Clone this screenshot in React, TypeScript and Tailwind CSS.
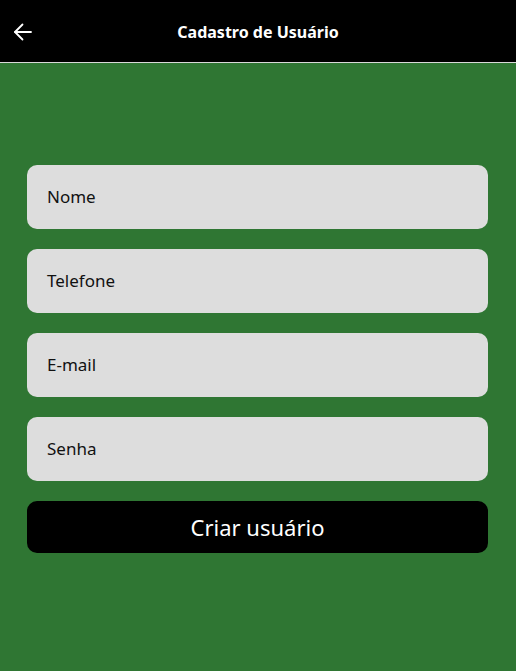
import React from "react";

export default function App() {
  const fields = ["Nome", "Telefone", "E-mail", "Senha"];
  return (
    <div className="w-[516px] h-[671px] bg-[#2f7633] flex flex-col" style={{ fontFamily: '"Noto Sans", "Open Sans", sans-serif' }}>
      <div className="h-[63px] bg-black border-b border-[#d9d9d9] flex items-center relative shrink-0">
        <div className="absolute left-[11px] top-[20px]">
          <svg width="24" height="24" viewBox="0 0 24 24" fill="none" stroke="white" strokeWidth="1.8" strokeLinecap="round" strokeLinejoin="round">
            <path d="M20 12H4" />
            <path d="M11.5 4.5L4 12l7.5 7.5" />
          </svg>
        </div>
        <div className="flex-1 text-center text-white font-bold text-[16px] leading-none pt-[2px]">Cadastro de Usuário</div>
      </div>
      <div className="flex flex-col gap-5 pl-[27px] pr-[28px] pt-[102px]">
        {fields.map((f) => (
          <div key={f} className="h-[64px] bg-[#dddddd] rounded-[10px] flex items-center px-5 text-[17px] text-[#111]">
            {f}
          </div>
        ))}
        <div className="h-[52px] bg-black rounded-[10px] flex items-center justify-center text-white text-[22px]">
          Criar usuário
        </div>
      </div>
    </div>
  );
}
